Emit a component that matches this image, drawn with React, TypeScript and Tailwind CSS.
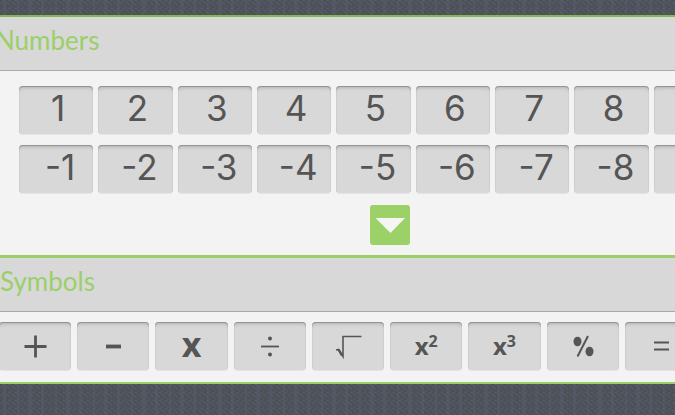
import React from 'react';

interface KeyProps {
  label: string;
  children?: React.ReactNode;
  className?: string;
}

const numbers = [1, 2, 3, 4, 5, 6, 7, 8];

function Key({ label, children, className = '' }: KeyProps) {
  return (
    <button
      type="button"
      aria-label={label}
      className={`flex h-12 min-w-0 items-center justify-center rounded bg-[#d8d8d8] text-[#555] shadow-[inset_0_1px_1px_#8f8f8f,inset_0_4px_3px_-1px_#c2c2c2,0_1px_0_#e4e4e4] ${className}`}
    >
      {children}
    </button>
  );
}

function Icon({ children }: { children: React.ReactNode }) {
  return (
    <svg viewBox="0 0 28 28" className="size-7 shrink-0" fill="none" stroke="currentColor" aria-hidden="true">
      {children}
    </svg>
  );
}

const symbols = [
  { label: 'Plus', glyph: <Icon><path d="M3.5 14.5h22M14.5 3.5v22" strokeWidth="2.8" /></Icon> },
  { label: 'Minus', glyph: <Icon><path d="M7 14.5h15" strokeWidth="3.8" /></Icon> },
  { label: 'Multiply', glyph: <span className="pb-1 text-[34px] leading-8 font-bold">x</span> },
  {
    label: 'Divide',
    glyph: (
      <Icon>
        <path d="M5 14.5h18" strokeWidth="1.8" />
        <circle cx="14" cy="6.5" r="2" fill="currentColor" stroke="none" />
        <circle cx="14" cy="22.5" r="2" fill="currentColor" stroke="none" />
      </Icon>
    ),
  },
  {
    label: 'Square root',
    glyph: (
      <Icon>
        <path d="M2 18l2.5-.5 4.5 7V4.5h18.5" strokeWidth="1.6" />
        <path d="M4.5 17.5l3.5 6" strokeWidth="2.4" />
      </Icon>
    ),
  },
  {
    label: 'Squared',
    glyph: <span className="text-2xl font-bold">x<sup className="text-base">2</sup></span>,
  },
  {
    label: 'Cubed',
    glyph: <span className="text-2xl font-bold">x<sup className="text-base">3</sup></span>,
  },
  {
    label: 'Percent',
    glyph: (
      <Icon>
        <path d="M19 4L8.5 24.5" strokeWidth="2" />
        <ellipse cx="8.5" cy="9.5" rx="4" ry="4.8" fill="currentColor" stroke="none" />
        <ellipse cx="20.5" cy="19.5" rx="4" ry="4.8" fill="currentColor" stroke="none" />
      </Icon>
    ),
  },
  { label: 'Equals', glyph: <Icon><path d="M7 10.5h15M7 17.5h15" strokeWidth="2" /></Icon> },
];

function SectionHeader({ title, className = '' }: { title: string; className?: string }) {
  return (
    <header className="h-[54px] border-b border-[#a9a9a9] bg-[#d8d8d8] pt-[3px]">
      <h2 className={`font-[Lato,sans-serif] text-[26px] leading-10 text-[#9bcf68] ${className}`}>{title}</h2>
    </header>
  );
}

// Woven backdrop behind the panels
function Fabric() {
  return (
    <svg className="absolute inset-0 size-full" aria-hidden="true">
      <defs>
        <pattern id="weave" width="6" height="8" patternUnits="userSpaceOnUse">
          <path d="M0 2h2v1H0zM3 0h2v1H3zM2 4h2v1H2zM5 6h1v1H5z" fill="#686b6c" fillOpacity=".4" />
          <path d="M1 6h2v1H1zM4 3h1v2H4zM0 0h1v1H0z" fill="#3f4550" fillOpacity=".4" />
        </pattern>
        <pattern id="threads" width="38" height="8" patternUnits="userSpaceOnUse">
          <path d="M3 0h3v8H3zM17 0h2v8h-2zM28 0h4v8h-4z" fill="#5d6675" fillOpacity=".3" />
        </pattern>
      </defs>
      <rect width="100%" height="100%" fill="url(#weave)" />
      <rect width="100%" height="100%" fill="url(#threads)" />
    </svg>
  );
}

export default function App() {
  return (
    <div className="relative min-h-screen overflow-hidden bg-[#4d525b] pt-[15px] font-['Open_Sans',sans-serif]">
      <Fabric />
      <main className="relative border-b-2 border-[#9bcf68] bg-[#f3f3f3]">
        <section className="border-t-2 border-[#82ba52]">
          <SectionHeader title="Numbers" className="-ml-[5px]" />
          <div className="-mr-[53px] ml-[19px] grid grid-cols-9 gap-x-[5px] gap-y-[11px] pt-[15px]">
            {numbers.map((n) => (
              <Key key={n} label={`${n}`} className="pb-1 pl-1 font-[Inter,sans-serif] text-[35px]">{n}</Key>
            ))}
            <Key label="9" />
            {numbers.map((n) => (
              <Key key={-n} label={`-${n}`} className="pb-1 pl-2 font-[Inter,sans-serif] text-[35px]">{-n}</Key>
            ))}
            <Key label="-9" />
          </div>
          <div className="flex justify-center pt-3 pb-[10px] pl-[105px]">
            <button type="button" aria-label="Show more numbers" className="size-10 rounded-[3px] bg-[#9bd167] text-[#f5f5f5]">
              <svg viewBox="0 0 40 40" className="size-10" fill="currentColor" aria-hidden="true">
                <path d="M5.5 13H35L20.5 28z" />
              </svg>
            </button>
          </div>
        </section>

        <section className="border-t-[3px] border-[#9bcf68]">
          <SectionHeader title="Symbols" />
          <div className="-mr-[22px] -ml-px grid grid-cols-9 gap-x-[6px] pt-[10px] pb-3">
            {symbols.map((s) => (
              <Key key={s.label} label={s.label}>{s.glyph}</Key>
            ))}
          </div>
        </section>
      </main>
    </div>
  );
}
